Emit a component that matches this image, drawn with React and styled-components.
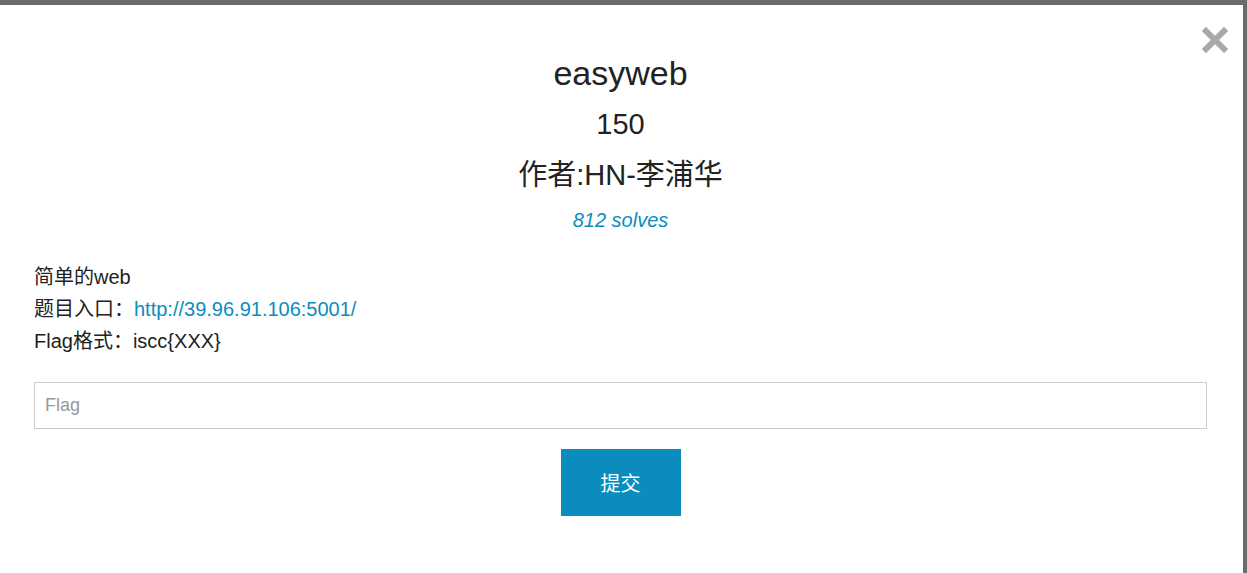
import React from 'react';
import styled, { createGlobalStyle } from 'styled-components';

const GlobalStyle = createGlobalStyle`
  html, body {
    margin: 0;
    padding: 0;
    height: 100%;
    background: #6b6b6b;
    overflow: hidden;
  }
  body {
    font-family: Arial, "Liberation Sans", "Noto Sans CJK SC", sans-serif;
    color: #222;
  }
`;

const Modal = styled.div`
  position: relative;
  box-sizing: border-box;
  width: 1243px;
  min-height: calc(100vh - 5px);
  margin-top: 5px;
  background: #fff;
  padding: 43px 36px 40px 34px;
`;

const Close = styled.button`
  position: absolute;
  top: 22px;
  right: 15px;
  width: 26px;
  height: 26px;
  padding: 0;
  border: 0;
  background: none;
  cursor: pointer;
  display: flex;
  align-items: center;
  justify-content: center;
`;

const Header = styled.div`
  text-align: center;
`;

const Title = styled.div`
  font-size: ${p => p.$size}px;
  line-height: 51px;
  color: #222;
`;

const Solves = styled.div`
  margin-top: 5px;
  font-size: 20px;
  line-height: 28px;
  font-style: italic;
  color: #0a8dbe;
`;

const Description = styled.div`
  margin-top: 27px;
  font-size: 20px;
  line-height: 32px;
  color: #222;
`;

const Link = styled.a`
  color: #0a8dbe;
  text-decoration: none;
`;

const FlagInput = styled.input`
  display: block;
  box-sizing: border-box;
  width: 100%;
  height: 47px;
  margin-top: 25px;
  padding: 0 10px;
  border: 1px solid #ccc;
  font-family: Arial, "Liberation Sans", sans-serif;
  font-size: 18px;
  color: #333;
  outline: none;
  &::placeholder {
    color: #999;
  }
`;

const Actions = styled.div`
  display: flex;
  justify-content: center;
  margin-top: 20px;
`;

const Submit = styled.button`
  width: 120px;
  height: 67px;
  border: 0;
  background: #0a8dbd;
  color: #fff;
  font-family: Arial, "Liberation Sans", "Noto Sans CJK SC", sans-serif;
  font-size: 20px;
  cursor: pointer;
`;

export default function App() {
  return (
    <>
      <GlobalStyle />
      <Modal>
        <Close aria-label="close">
          <svg width="26" height="26" viewBox="0 0 26 26">
            <path d="M4 4 L22 22 M22 4 L4 22" stroke="#a9a9a9" strokeWidth="6" strokeLinecap="square" />
          </svg>
        </Close>
        <Header>
          <Title $size={34}>easyweb</Title>
          <Title $size={29}>150</Title>
          <Title $size={29}>作者:HN-李浦华</Title>
          <Solves>812 solves</Solves>
        </Header>
        <Description>
          <div>简单的web</div>
          <div>
            题目入口：<Link href="#">http://39.96.91.106:5001/</Link>
          </div>
          <div>Flag格式：iscc{'{'}XXX{'}'}</div>
        </Description>
        <FlagInput placeholder="Flag" />
        <Actions>
          <Submit>提交</Submit>
        </Actions>
      </Modal>
    </>
  );
}
